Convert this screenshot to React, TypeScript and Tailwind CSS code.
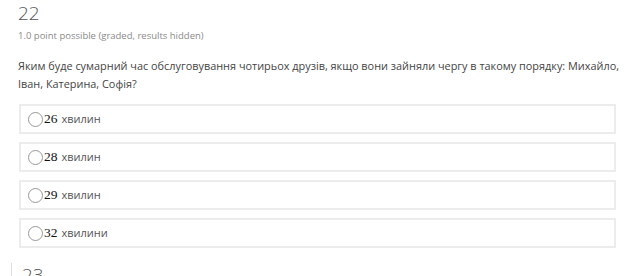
import React from 'react';

const options = [
  { num: '26', text: 'хвилин' },
  { num: '28', text: 'хвилин' },
  { num: '29', text: 'хвилин' },
  { num: '32', text: 'хвилини' },
];

export default function App() {
  return (
    <div className="w-[640px] h-[276px] overflow-hidden bg-white font-[family-name:'Open_Sans',sans-serif]">
      <div className="pl-[18px] pr-[24px] pt-[1px]">
        <h3 className="text-[19px] leading-[24px] font-light text-[#555]">22</h3>
        <div className="mt-[4px] text-[9.5px] leading-[14px] text-[#8a8a8a]">
          1.0 point possible (graded, results hidden)
        </div>
        <p className="mt-[14px] -mr-[16px] text-[10.9px] leading-[18px] text-[#444]">
          Яким буде сумарний час обслуговування чотирьох друзів, якщо вони зайняли чергу в такому порядку: Михайло,
          Іван, Катерина, Софія?
        </p>
        <div className="mt-[11px] ml-[1px] flex flex-col gap-[8px]">
          {options.map((o) => (
            <label
              key={o.num}
              className="flex h-[30px] items-center border-2 border-[#ececec] pl-[7px] text-[11px] text-[#555]"
            >
              <span className="h-[15px] w-[15px] rounded-full border border-[#999] bg-white" />
              <span className="ml-[1px] font-[family-name:'Liberation_Serif',serif] text-[13.5px] text-[#111]">
                {o.num}
              </span>
              <span className="ml-[4px]">{o.text}</span>
            </label>
          ))}
        </div>
      </div>
      <div className="mt-[15px] ml-[11px] border-l border-[#ddd] pl-[10px]">
        <h3 className="text-[19px] leading-[24px] font-light text-[#555]">23</h3>
      </div>
    </div>
  );
}
